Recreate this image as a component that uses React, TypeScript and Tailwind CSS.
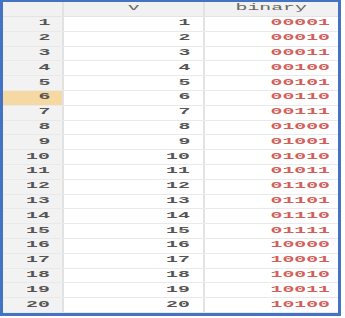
import React from 'react';

const rows = Array.from({ length: 20 }, (_, i) => ({
  n: i + 1,
  v: i + 1,
  binary: (i + 1).toString(2).padStart(5, '0'),
}));

// monospace glyphs are drawn wide in the picture, so stretch them sideways
const Stretch: React.FC<{ children: React.ReactNode; className?: string }> = ({ children, className = '' }) => (
  <span className={`inline-block scale-x-[2.2] ${className}`}>{children}</span>
);

const App: React.FC = () => {
  return (
    <div className="w-[345px] h-[318px] bg-white" style={{ fontFamily: '"Liberation Mono", monospace' }}>
      <div className="w-[341px] h-[316px] border-l-[3px] border-r-[3px] border-t-2 border-b-[3px] border-[#4472c4] flex flex-col overflow-hidden">
        {/* header */}
        <div className="flex h-[15px] bg-[#f1f1f1] border-b border-[#e4e4e4] text-[9px] text-[#666]">
          <div className="w-[61px] border-r-2 border-[#e2e2e2]" />
          <div className="w-[141px] border-r-2 border-[#e2e2e2] flex items-center justify-center">
            <Stretch>v</Stretch>
          </div>
          <div className="flex-1 flex items-center justify-center">
            <Stretch>binary</Stretch>
          </div>
        </div>

        {rows.map((r) => (
          <div key={r.n} className="flex h-[14.8px] border-b border-[#e9e9e9] text-[9px] font-bold leading-none">
            <div
              className={`w-[61px] border-r-2 border-[#e2e2e2] flex items-center justify-end pr-[12px] text-[#555] ${
                r.n === 6 ? 'bg-[#f6d8a3]' : 'bg-[#f2f2f2]'
              }`}
            >
              <Stretch className="origin-right">{r.n}</Stretch>
            </div>
            <div className="w-[141px] border-r-2 border-[#e2e2e2] flex items-center justify-end pr-[13px] text-[#555]">
              <Stretch className="origin-right">{r.v}</Stretch>
            </div>
            <div className="flex-1 flex items-center justify-end pr-[8px] text-[#d2605a]">
              <Stretch className="origin-right">{r.binary}</Stretch>
            </div>
          </div>
        ))}
      </div>
    </div>
  );
};

export default App;
